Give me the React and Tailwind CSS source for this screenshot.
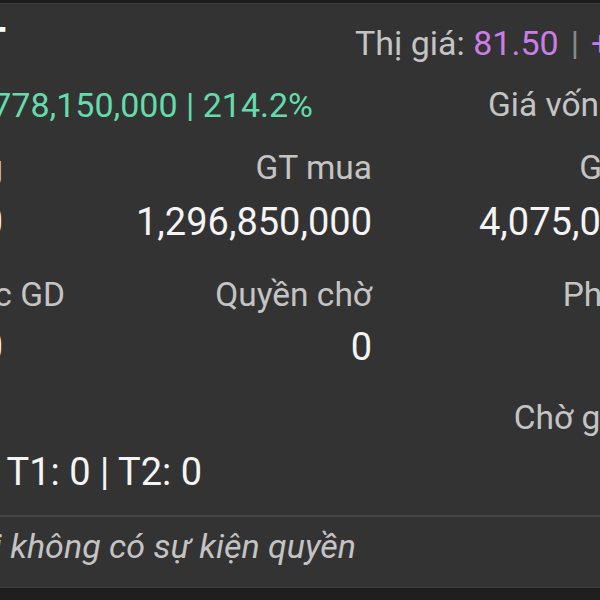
import React from 'react';

const label = "text-[33.5px] leading-[40px] text-[#c4c4c4] whitespace-nowrap text-right";
const value = "text-[38px] leading-[44px] text-[#f4f4f4] whitespace-nowrap text-right";

export default function App() {
    return (
        <div className="w-[600px] h-[600px] overflow-hidden bg-[#1f1f1f] font-['Roboto',sans-serif]">
            <div className="h-[3px] bg-[#1c1c1c]" />
            <div className="h-[585px] bg-[#333333] border-t border-b border-[#3f3f3f] overflow-hidden">
                <div className="-ml-[300px] w-[1015px] grid grid-cols-[303px_369px_343px]">
                    {/* Header: ticker + market price */}
                    <div className="mt-[19px] h-[40px] -mr-[3px] text-right text-[40px] leading-[40px] font-bold text-white whitespace-nowrap">FPT</div>
                    <div className="col-span-2 mt-[19px] h-[40px] pl-[352px] text-[34px] leading-[40px] whitespace-nowrap">
                        <span className="text-[#c4c4c4]">Thị giá: </span>
                        <span className="text-[#c97ee6]">81.50</span>
                        <span className="text-[#8a8a8a] px-[12px]">|</span>
                        <span className="text-[#c97ee6]">+0.50 (0.62%)</span>
                    </div>

                    {/* Profit + cost */}
                    <div className="col-span-2 mt-[22px] pr-[59px] text-right text-[34px] leading-[40px] text-[#63dcab] whitespace-nowrap">+2,778,150,000 | 214.2%</div>
                    <div className="mt-[22px] pl-[116px] text-[33.5px] leading-[40px] text-[#c4c4c4] whitespace-nowrap">Giá vốn: 25.94</div>

                    {/* Row 1 */}
                    <div className={`${label} mt-[23px]`}>Số lượng</div>
                    <div className={`${label} mt-[23px]`}>GT mua</div>
                    <div className={`${label} mt-[23px]`}>Giá trị TT</div>
                    <div className={`${value} mt-[12px]`}>50,000</div>
                    <div className={`${value} mt-[12px]`}>1,296,850,000</div>
                    <div className={`${value} mt-[12px]`}>4,075,000,000</div>

                    {/* Row 2 */}
                    <div className={`${label} mt-[31px] -mr-[62px]`}>KL được GD</div>
                    <div className={`${label} mt-[31px]`}>Quyền chờ</div>
                    <div className={`${label} mt-[31px]`}>Phong tỏa</div>
                    <div className={`${value} mt-[10px]`}>50,000</div>
                    <div className={`${value} mt-[10px]`}>0</div>
                    <div className={`${value} mt-[10px]`}>0</div>

                    {/* Row 3 */}
                    <div className={`${label} mt-[29px]`}></div>
                    <div className={`${label} mt-[29px]`}></div>
                    <div className={`${label} mt-[29px] -mr-[2px]`}>Chờ giao dịch</div>
                    <div className={`${value} col-span-2 mt-[12px] pr-[170px]`}>T1: 0 | T2: 0</div>
                    <div className={`${value} mt-[12px]`}>0</div>
                </div>

                <div className="mt-[21px] h-[2px] bg-[#464646]" />

                <div className="-ml-[300px] w-[1015px] grid grid-cols-[303px_369px_343px]">
                    <div className="col-span-2 mt-[9px] pr-[16px] text-right text-[34px] leading-[40px] italic text-[#c4c4c4] whitespace-nowrap">Mã CK này hiện tại không có sự kiện quyền</div>
                </div>
            </div>
        </div>
    );
}
